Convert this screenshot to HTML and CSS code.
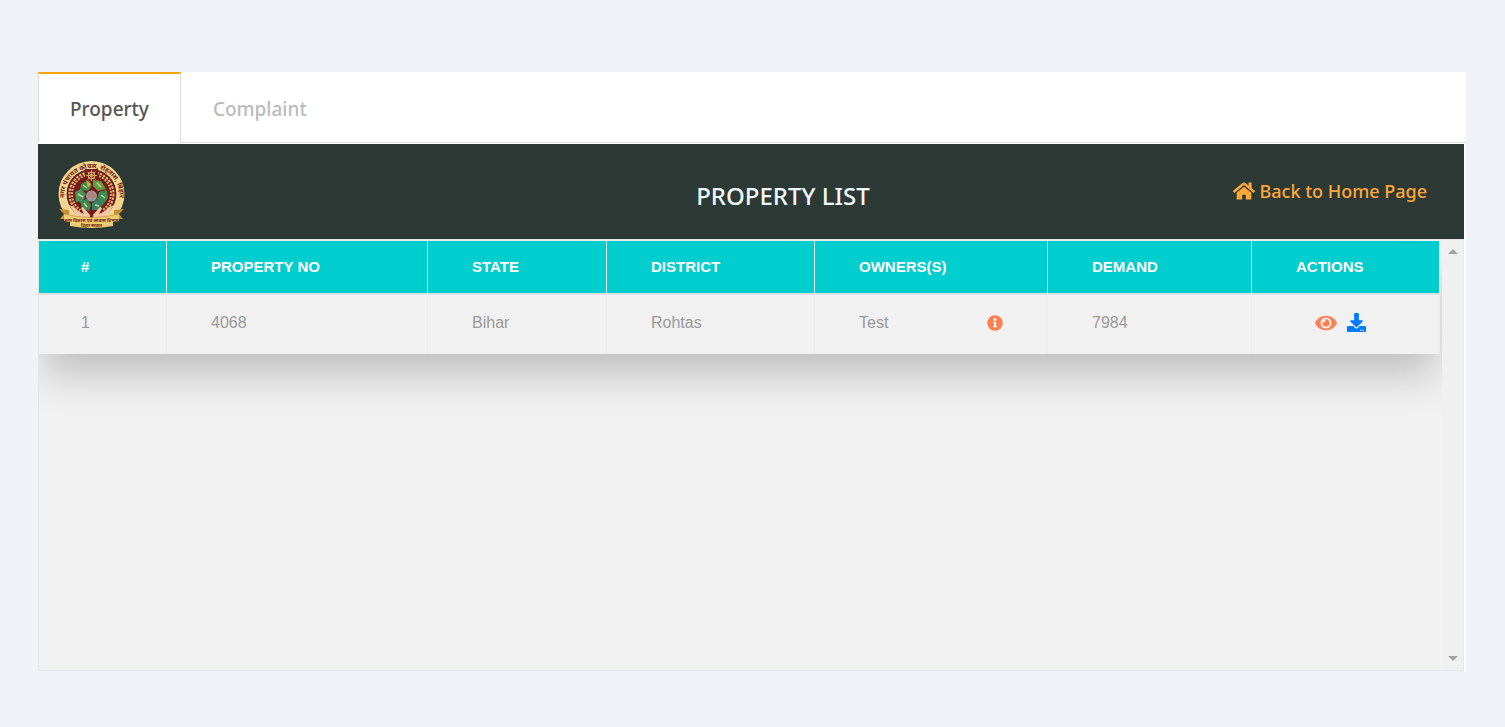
FILE: index.html
```html
<!DOCTYPE html>
<html lang="en">
<head>
    <meta charset="UTF-8">
    <meta name="viewport" content="width=device-width, initial-scale=1.0">
    <title>Property List</title>
    <link rel="stylesheet" href="styles.css">
</head>
<body>
    <div class="tabs-container">
        <div class="tabs" role="tablist">
            <button type="button" class="tab active" role="tab" aria-selected="true">Property</button>
            <button type="button" class="tab" role="tab" aria-selected="false">Complaint</button>
        </div>

        <div class="panel">
            <header class="panel-header">
                <svg class="logo" viewBox="0 0 68 68" role="img" aria-label="Nagar Panchayat Kochas">
                    <defs>
                        <path id="logoArc" d="M8.500 46A27.500 27.500 0 1 1 59.500 46"/>
                    </defs>
                    <circle cx="33.500" cy="34" r="33" fill="#f0d58a"/>
                    <circle cx="33.500" cy="34" r="26" fill="#f6e6b0"/>
                    <circle cx="33.500" cy="34" r="25" fill="#741a1c"/>
                    <text class="logo-text" font-size="6.500"><textPath href="#logoArc" startOffset="50%" text-anchor="middle">नगर पंचायत कोचस, रोहतास, बिहार</textPath></text>
                    <!-- wheat wreath -->
                    <circle cx="33.500" cy="34" r="22" fill="none" stroke="#e2bd68" stroke-width="2" stroke-dasharray="2.400 1.200"/>
                    <circle cx="33.500" cy="34" r="19.500" fill="none" stroke="#d9b05e" stroke-width="2" stroke-dasharray="2 1.200"/>
                    <path d="M27 9h13v13H27zM22 50h23v8H22z" fill="#741a1c"/>
                    <!-- wheel -->
                    <g stroke="#e2bd68" fill="none">
                        <circle cx="33.500" cy="15.500" r="3.500"/>
                        <path d="M33.500 10v11M28 15.500h11M29.500 11.500l8 8M37.500 11.500l-8 8" stroke-width=".8"/>
                    </g>
                    <!-- green ring -->
                    <g fill="#3c8a50">
                        <path d="M23 24l8-4 3 6-4 5-8-1z"/>
                        <path d="M35 20l8 1 5 8-8 2-5-5z" fill="#679b3f"/>
                        <path d="M41 32l8-2 1 8-5 7-6-6z"/>
                        <path d="M34 43l5-4 6 5-4 6h-7z" fill="#388064"/>
                        <path d="M22 41l7-2 4 6-2 6-7-3z"/>
                        <path d="M17 32l6-3 5 5-3 7-7 1z" fill="#47935b"/>
                    </g>
                    <path d="M25 25l4 3M39 23l4 4M20 34l5 3M43 35l4 3M26 43l3 4M37 45l4 1" stroke="#c7d98e" stroke-width="1.500"/>
                    <path d="M28 20l5 4-3 4z" fill="#e6a82b"/>
                    <circle cx="33.500" cy="36" r="5.500" fill="#8c9ca0"/>
                    <path d="M29.500 38v-3l2-2 2-3 2 3 2 2v3z" fill="#b77f79"/>
                    <!-- hands -->
                    <g fill="#f5c5a0">
                        <path d="M11 45q6 2 9 6l6 3-3-6 2-1 7 8v4H21z"/>
                        <path d="M56 45q-6 2-9 6l-6 3 3-6-2-1-7 8v4h11z"/>
                    </g>
                    <!-- ribbon -->
                    <path d="M1 49l10 1v9H2l4-5zM66 49l-10 1v9h9l-4-5z" fill="#c49038"/>
                    <path d="M6 54q27.500 7 55 0v7l-6 1v4q-21.500 4-43 0v-4l-6-1z" fill="#eccb72"/>
                    <path d="M6 54q27.500 7 55 0" fill="none" stroke="#bd8933" stroke-width=".6"/>
                    <text class="logo-text" x="33.500" y="62" font-size="4.500" text-anchor="middle">नगर विकास एवं आवास विभाग</text>
                    <text class="logo-text" x="33.500" y="66.500" font-size="4" text-anchor="middle">बिहार सरकार</text>
                </svg>
                <h1 class="title">PROPERTY LIST</h1>
                <a href="#" class="home-link">
                    <svg class="home-icon" viewBox="0 0 576 512" aria-hidden="true"><path d="M280.370 148.260L96 300.110V464a16 16 0 0 0 16 16l112.060-.290a16 16 0 0 0 15.920-16V368a16 16 0 0 1 16-16h64a16 16 0 0 1 16 16v95.640a16 16 0 0 0 16 16.050L464 480a16 16 0 0 0 16-16V300L295.670 148.260a12.190 12.190 0 0 0-15.300 0zM571.600 251.470L488 182.560V44.050a12 12 0 0 0-12-12h-56a12 12 0 0 0-12 12v72.610L318.470 43a48 48 0 0 0-61 0L4.340 251.470a12 12 0 0 0-1.600 16.900l25.500 31A12 12 0 0 0 45.150 301l235.220-193.740a12.190 12.190 0 0 1 15.300 0L530.900 301a12 12 0 0 0 16.900-1.600l25.500-31a12 12 0 0 0-1.700-16.930z"/></svg>
                    Back to Home Page
                </a>
            </header>

            <div class="table-box">
                <div class="table-area">
                    <table class="property-table">
                        <colgroup>
                            <col class="col-num">
                            <col class="col-property">
                            <col class="col-state">
                            <col class="col-district">
                            <col class="col-owners">
                            <col class="col-demand">
                            <col class="col-actions">
                        </colgroup>
                        <thead>
                            <tr>
                                <th>#</th>
                                <th>PROPERTY NO</th>
                                <th>STATE</th>
                                <th>DISTRICT</th>
                                <th>OWNERS(S)</th>
                                <th>DEMAND</th>
                                <th>ACTIONS</th>
                            </tr>
                        </thead>
                        <tbody>
                            <tr>
                                <td>1</td>
                                <td>4068</td>
                                <td>Bihar</td>
                                <td>Rohtas</td>
                                <td>
                                    <div class="owner">
                                        Test
                                        <button type="button" class="icon-btn info" aria-label="Owner details">
                                            <svg viewBox="0 0 16 16" width="16" height="16"><circle cx="8" cy="8" r="7.750" fill="currentColor"/><circle cx="8" cy="4.500" r="1.400" fill="#fff"/><path d="M6.200 6.700h2.900v4.200h.9v1.400H6.100v-1.400H7V8.100h-.8z" fill="#fff"/></svg>
                                        </button>
                                    </div>
                                </td>
                                <td>7984</td>
                                <td>
                                    <div class="actions">
                                        <button type="button" class="icon-btn view" aria-label="View">
                                            <svg viewBox="0 0 576 512" width="22" height="20"><path fill="currentColor" d="M572.520 241.400C518.290 135.590 410.930 64 288 64S57.680 135.640 3.480 241.410a32.350 32.350 0 0 0 0 29.190C57.710 376.410 165.070 448 288 448s230.320-71.640 284.520-177.410a32.350 32.350 0 0 0 0-29.190zM288 400a144 144 0 1 1 144-144 143.930 143.930 0 0 1-144 144zm0-240a95.310 95.310 0 0 0-25.310 3.790 47.850 47.850 0 0 1-66.900 66.900A95.780 95.780 0 1 0 288 160z"/></svg>
                                        </button>
                                        <button type="button" class="icon-btn download" aria-label="Download">
                                            <svg viewBox="0 0 512 512" width="19" height="19"><path fill="currentColor" d="M216 0h80c13.300 0 24 10.700 24 24v168h87.700c17.800 0 26.700 21.500 14.100 34.100L269.700 378.300c-7.500 7.500-19.800 7.500-27.300 0L90.100 226.100c-12.600-12.600-3.700-34.100 14.100-34.100H192V24c0-13.300 10.700-24 24-24zm296 376v112c0 13.300-10.700 24-24 24H24c-13.300 0-24-10.700-24-24V376c0-13.300 10.700-24 24-24h146.700l49 49c20.100 20.100 52.500 20.100 72.600 0l49-49H488c13.300 0 24 10.700 24 24zm-124 88c0-11-9-20-20-20s-20 9-20 20 9 20 20 20 20-9 20-20zm64 0c0-11-9-20-20-20s-20 9-20 20 9 20 20 20 20-9 20-20z"/></svg>
                                        </button>
                                    </div>
                                </td>
                            </tr>
                        </tbody>
                    </table>
                </div>
                <div class="scroll-track">
                    <button type="button" class="scroll-btn" aria-label="Scroll up">
                        <svg viewBox="0 0 10 5" width="10" height="5"><path d="M0 5l5-5 5 5z" fill="currentColor"/></svg>
                    </button>
                    <button type="button" class="scroll-btn" aria-label="Scroll down">
                        <svg viewBox="0 0 10 5" width="10" height="5"><path d="M0 0l5 5 5-5z" fill="currentColor"/></svg>
                    </button>
                </div>
            </div>
        </div>
    </div>
</body>
</html>
```

FILE: styles.css
```css
* {
    box-sizing: border-box;
}

body {
    margin: 0;
    padding: 72px 39px 56px 38px;
    min-height: 100vh;
    display: flex;
    background-color: #eff3f7;
    font-family: "Liberation Sans", Arial, sans-serif;
}

button {
    font: inherit;
    border: none;
    background: none;
    padding: 0;
    cursor: pointer;
}

svg {
    display: block;
}

.tabs-container {
    flex: 1;
    display: flex;
    flex-direction: column;
    background-color: #ffffff;
}

/* Tabs */
.tabs {
    display: flex;
    height: 71px;
    margin-bottom: 1px;
    box-shadow: inset 0 -1px #dddddd;
}

.tab {
    padding: 0 32px;
    border-top: 2px solid transparent;
    color: #bbbbbb;
    font-family: "Noto Sans", "Segoe UI", sans-serif;
    font-size: 19px;
    font-weight: 500;
}

.tab.active {
    padding: 0 31px;
    border: 1px solid #dddddd;
    border-top: 2px solid orange;
    border-bottom: none;
    background-color: #ffffff;
    color: #555555;
}

.panel {
    flex: 1;
    display: flex;
    flex-direction: column;
    margin-right: 2px;
}

/* Header */
.panel-header {
    display: grid;
    grid-template-columns: 1fr auto 1fr;
    align-items: center;
    height: 95px;
    padding: 0 37px 0 20px;
    background-color: #2d3934;
    font-family: "Noto Sans", "Segoe UI", sans-serif;
}

.logo {
    width: 68px;
    height: 68px;
    margin-top: 4px;
}

.title {
    margin: 8px 0 0 81px;
    color: #f0f8ff;
    font-size: 24px;
    font-weight: 500;
}

.logo-text {
    fill: #741a1c;
    font-family: "Noto Sans", sans-serif;
    font-weight: bold;
}

.home-link {
    display: flex;
    align-items: center;
    justify-content: flex-end;
    gap: 4px;
    padding-bottom: 2px;
    color: #ffa83a;
    font-size: 18px;
    font-weight: 500;
    text-decoration: none;
}

.home-icon {
    width: 22px;
    height: 20px;
    fill: currentColor;
}

/* Table */
.table-box {
    flex: 1;
    display: flex;
    border: 1px solid #e6e6e6;
    background-color: #f1f1f1;
}

.table-area {
    flex: 1;
    padding: 1px 2px 0 0;
    overflow: hidden;
}

.property-table {
    width: 100%;
    table-layout: fixed;
    border-collapse: separate;
    border-spacing: 0;
    background-color: #f1f1f1;
    box-shadow: 0 24px 40px -4px rgba(0, 0, 0, 0.21);
}

.col-num { width: 128px; }
.col-property { width: 261px; }
.col-state { width: 179px; }
.col-district { width: 208px; }
.col-owners { width: 233px; }
.col-demand { width: 204px; }
.col-actions { width: 188px; }

th {
    height: 54px;
    padding: 0 0 2px 44px;
    border-right: 1px solid #f1f1f1;
    border-bottom: 2px solid #dee2e6;
    background-color: #00cdcd;
    color: #ffffff;
    font-size: 15px;
    text-align: left;
}

td {
    height: 59px;
    padding: 0 44px 4px;
    border-right: 1px solid #ececec;
    color: #999999;
    font-size: 16px;
}

th:first-child,
td:first-child {
    padding-left: 42px;
}

.owner {
    display: flex;
    align-items: center;
    justify-content: space-between;
}

.actions {
    display: flex;
    align-items: center;
    gap: 10px;
    padding-left: 19px;
}

.info,
.view {
    color: #ff7f50;
}

.download {
    color: #007bff;
}

/* Scrollbar */
.scroll-track {
    display: flex;
    flex-direction: column;
    justify-content: space-between;
    width: 21px;
    padding: 9px 0;
    background-color: #f0f0f0;
}

.scroll-btn {
    display: flex;
    justify-content: center;
    color: #a3a3a3;
}
```
